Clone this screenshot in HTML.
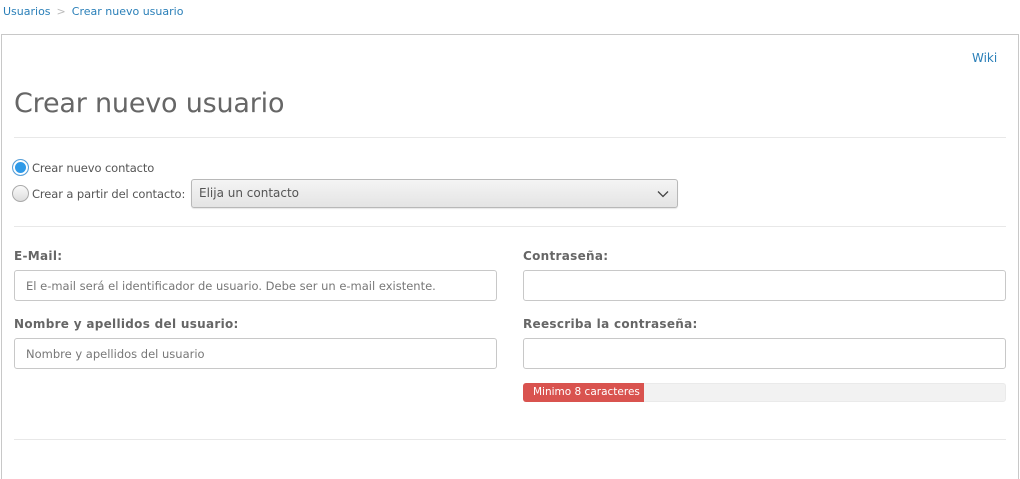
<!DOCTYPE html>
<html><head><meta charset="utf-8"><style>
*{box-sizing:border-box;margin:0;padding:0}
html,body{width:1020px;height:479px;overflow:hidden}
body{background:#fff;font-family:"DejaVu Sans","Liberation Sans",sans-serif;color:#555;position:relative}
.a{position:absolute}
.bc{top:5px;left:3px;font-size:11px;color:#2a7fb8;white-space:nowrap}
.bc span{color:#bbb;margin:0 6px}
.panel{left:1px;top:34px;width:1018px;height:445px;border:1px solid #c8c8c8;border-bottom:none}
.wiki{left:972px;top:51px;font-size:12px;color:#2a7fb8}
h1{position:absolute;left:14px;top:88px;font-size:27px;font-weight:normal;color:#666;letter-spacing:-0.2px}
.hr{position:absolute;left:14px;width:992px;height:1px;background:#e8e8e8}
.radio{width:17px;height:17px;border-radius:50%;border:1px solid #aaa;background:linear-gradient(#fafafa,#ddd)}
.radio.on{border:1px solid #5aa0d8;background:#2f9ae8;box-shadow:inset 0 0 0 2px #fff}
.rl{font-size:11.5px;color:#555;white-space:nowrap;letter-spacing:-0.1px}
.sel{left:191px;top:179px;width:487px;height:29px;border:1px solid #b8b8b8;border-radius:3px;background:linear-gradient(#f4f4f4,#e4e4e4);font-size:12px;color:#555;padding:6px 7px;box-shadow:0 1px 1px rgba(0,0,0,.1)}
.lbl{font-size:12px;font-weight:bold;color:#666;letter-spacing:0.3px}
.inp{height:31px;border:1px solid #c8c8c8;border-radius:3px;font-size:11.5px;color:#777;padding:8px 11px;white-space:nowrap}
.bar{left:523px;top:383px;width:483px;height:19px;background:#f2f2f2;border-radius:3px;border:1px solid #eaeaea}
.barf{left:523px;top:383px;width:121px;height:19px;background:#d9534f;border-radius:3px 0 0 3px;color:#fff;font-size:10.5px;padding:3px 10px;white-space:nowrap}
</style></head><body>
<div class="a bc">Usuarios<span>&gt;</span>Crear nuevo usuario</div>
<div class="a panel"></div>
<div class="a wiki">Wiki</div>
<h1>Crear nuevo usuario</h1>
<div class="hr" style="top:137px"></div>
<div class="a radio on" style="left:12px;top:159px"></div>
<div class="a rl" style="left:32px;top:161px">Crear nuevo contacto</div>
<div class="a radio" style="left:12px;top:185px"></div>
<div class="a rl" style="left:32px;top:187px">Crear a partir del contacto:</div>
<div class="a sel">Elija un contacto
<svg style="position:absolute;right:8px;top:10px" width="12" height="8" viewBox="0 0 12 8"><path d="M1 1.5L6 6.5L11 1.5" fill="none" stroke="#444" stroke-width="1.3"/></svg></div>
<div class="hr" style="top:226px"></div>
<div class="a lbl" style="left:14px;top:249px">E-Mail:</div>
<div class="a inp" style="left:14px;top:270px;width:483px">El e-mail será el identificador de usuario. Debe ser un e-mail existente.</div>
<div class="a lbl" style="left:14px;top:317px">Nombre y apellidos del usuario:</div>
<div class="a inp" style="left:14px;top:338px;width:483px">Nombre y apellidos del usuario</div>
<div class="a lbl" style="left:523px;top:249px">Contraseña:</div>
<div class="a inp" style="left:523px;top:270px;width:483px"></div>
<div class="a lbl" style="left:523px;top:317px">Reescriba la contraseña:</div>
<div class="a inp" style="left:523px;top:338px;width:483px"></div>
<div class="a bar"></div>
<div class="a barf">Minimo 8 caracteres</div>
<div class="hr" style="top:439px"></div>
</body></html>
